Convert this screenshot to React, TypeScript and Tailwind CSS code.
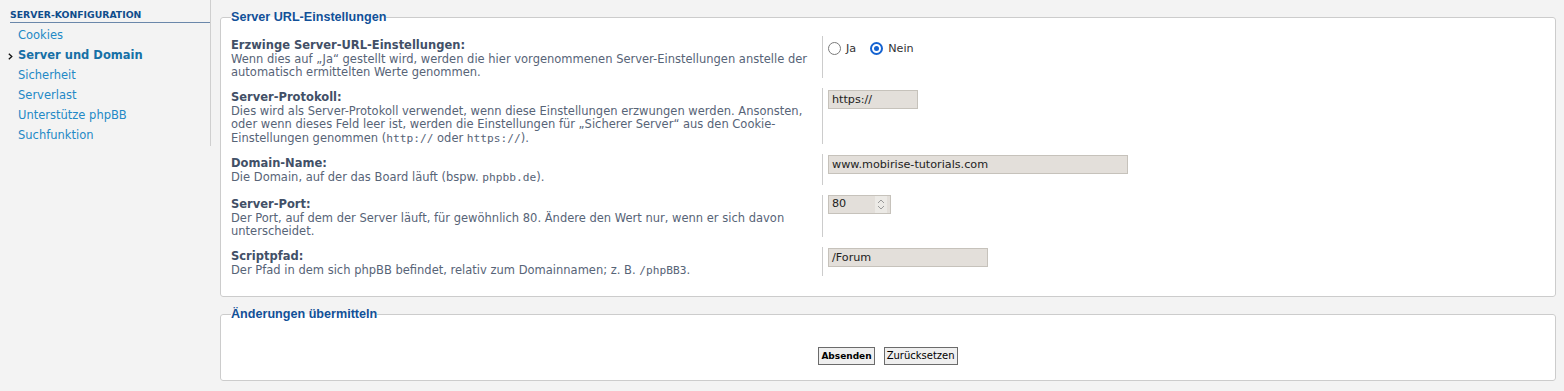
import React from "react";

const menu = [
  { label: "Cookies", active: false },
  { label: "Server und Domain", active: true },
  { label: "Sicherheit", active: false },
  { label: "Serverlast", active: false },
  { label: "Unterstütze phpBB", active: false },
  { label: "Suchfunktion", active: false },
];

const Mono = ({ children }: { children: React.ReactNode }) => (
  <span className="font-['DejaVu_Sans_Mono',monospace] text-[11.2px]">{children}</span>
);

const Radio = ({ checked, label }: { checked?: boolean; label: string }) => (
  <label className="flex items-center gap-[5px]">
    {checked ? (
      <span className="flex h-[13px] w-[13px] items-center justify-center rounded-full border-2 border-[#1563d1]">
        <span className="h-[5px] w-[5px] rounded-full bg-[#1563d1]" />
      </span>
    ) : (
      <span className="h-[13px] w-[13px] rounded-full border-[1.5px] border-[#7a7a7a]" />
    )}
    <span className="mt-[2px]">{label}</span>
  </label>
);

const TextBox = ({ value, width }: { value: string; width: string }) => (
  <div className={`h-[19px] ${width} border border-[#c6c2bb] bg-[#e3dfda] px-[3px] text-[11.2px] leading-[17px] text-[#222]`}>
    {value}
  </div>
);

const rows = [
  {
    title: "Erzwinge Server-URL-Einstellungen:",
    desc: (
      <>
        Wenn dies auf „Ja“ gestellt wird, werden die hier vorgenommenen Server-Einstellungen anstelle der
        <br />
        automatisch ermittelten Werte genommen.
      </>
    ),
    cls: "h-[42px]",
    field: (
      <div className="flex gap-[14px] pt-[3px] text-[11.2px] text-[#333]">
        <Radio label="Ja" />
        <Radio checked label="Nein" />
      </div>
    ),
  },
  {
    title: "Server-Protokoll:",
    desc: (
      <>
        Dies wird als Server-Protokoll verwendet, wenn diese Einstellungen erzwungen werden. Ansonsten,
        <br />
        oder wenn dieses Feld leer ist, werden die Einstellungen für „Sicherer Server“ aus den Cookie-
        <br />
        Einstellungen genommen (<Mono>http://</Mono> oder <Mono>https://</Mono>).
      </>
    ),
    cls: "h-[56px]",
    field: (
      <div className="pt-[2px]">
        <TextBox value="https://" width="w-[90px]" />
      </div>
    ),
  },
  {
    title: "Domain-Name:",
    desc: (
      <>
        Die Domain, auf der das Board läuft (bspw. <Mono>phpbb.de</Mono>).
      </>
    ),
    cls: "h-[31px]",
    field: (
      <div className="pt-[1px]">
        <TextBox value="www.mobirise-tutorials.com" width="w-[300px]" />
      </div>
    ),
  },
  {
    title: "Server-Port:",
    desc: (
      <>
        Der Port, auf dem der Server läuft, für gewöhnlich 80. Ändere den Wert nur, wenn er sich davon
        <br />
        unterscheidet.
      </>
    ),
    cls: "h-[42px]",
    field: (
      <div className="flex h-[19px] w-[63px] items-center justify-between border border-[#c6c2bb] bg-[#e3dfda] pl-[3px] pr-[3px] text-[11.2px] text-[#222]">
        <span>80</span>
        <span className="flex h-full items-center bg-[#eceae6] px-[1px]">
          <svg width="10" height="13" viewBox="0 0 10 13" fill="none" stroke="#9a9a9a" strokeWidth="1">
            <path d="M2 5 L5 2 L8 5" />
            <path d="M2 8 L5 11 L8 8" />
          </svg>
        </span>
      </div>
    ),
  },
  {
    title: "Scriptpfad:",
    desc: (
      <>
        Der Pfad in dem sich phpBB befindet, relativ zum Domainnamen; z. B. <Mono>/phpBB3</Mono>.
      </>
    ),
    cls: "h-[29px]",
    field: (
      <div className="pt-[1px]">
        <TextBox value="/Forum" width="w-[160px]" />
      </div>
    ),
  },
];

export default function App() {
  return (
    <div className="flex min-h-[391px] bg-[#f3f3f3] font-['DejaVu_Sans',sans-serif]">
      {/* sidebar */}
      <div className="w-[211px] shrink-0 self-start border-r border-[#cfcfcf]">
        <div className="ml-[10px] border-b border-[#6a87aa] pb-[2px] pt-[9px] text-[9.3px] font-bold uppercase leading-[11px] text-[#0f4c8c]">
          Server-Konfiguration
        </div>
        <ul className="mt-[3px]">
          {menu.map((m) => (
            <li key={m.label} className="relative flex h-[20px] items-center pl-[18px] text-[11.5px]">
              {m.active && (
                <svg className="absolute left-[8px] top-[7px]" width="5" height="7" viewBox="0 0 5 7" fill="none" stroke="#111" strokeWidth="1.3">
                  <path d="M0.8 0.8 L3.8 3.5 L0.8 6.2" />
                </svg>
              )}
              <span className={m.active ? "font-bold text-[#1670a6]" : "text-[#2389c6]"}>{m.label}</span>
            </li>
          ))}
        </ul>
      </div>

      {/* content */}
      <div className="ml-[9px] mr-[8px] flex-1 pt-[10px]">
        <fieldset className="rounded-[3px] border border-[#cccccc] bg-white pb-[20px]">
          <legend className="ml-[10px] font-['Liberation_Sans',sans-serif] text-[12.6px] font-bold leading-[14px] text-[#115098]">
            Server URL-Einstellungen
          </legend>
          <div className="flex flex-col gap-[10px] pt-[12px]">
            {rows.map((r) => (
              <div key={r.title} className="flex">
                <div className={`${r.cls} w-[602px] shrink-0 border-r border-[#cccccc] pl-[10px] pt-[3px] leading-[13.5px]`}>
                  <div className="text-[11.5px] font-bold text-[#425067]">{r.title}</div>
                  <div className="whitespace-nowrap text-[11.5px] text-[#576477]">{r.desc}</div>
                </div>
                <div className="pl-[5px]">{r.field}</div>
              </div>
            ))}
          </div>
        </fieldset>

        <fieldset className="mt-[10px] rounded-[3px] border border-[#cccccc] bg-white pb-[15px]">
          <legend className="ml-[10px] font-['Liberation_Sans',sans-serif] text-[12.6px] font-bold leading-[14px] text-[#115098]">
            Änderungen übermitteln
          </legend>
          <div className="flex justify-center gap-[9px] pt-[26px]">
            <button className="h-[18px] border border-[#6b6b6b] bg-[#efefef] px-[2px] text-[9px] font-bold leading-[16px] text-black">
              Absenden
            </button>
            <button className="h-[18px] border border-[#6b6b6b] bg-[#efefef] px-[2px] text-[10px] leading-[16px] text-black">
              Zurücksetzen
            </button>
          </div>
        </fieldset>
      </div>
    </div>
  );
}
